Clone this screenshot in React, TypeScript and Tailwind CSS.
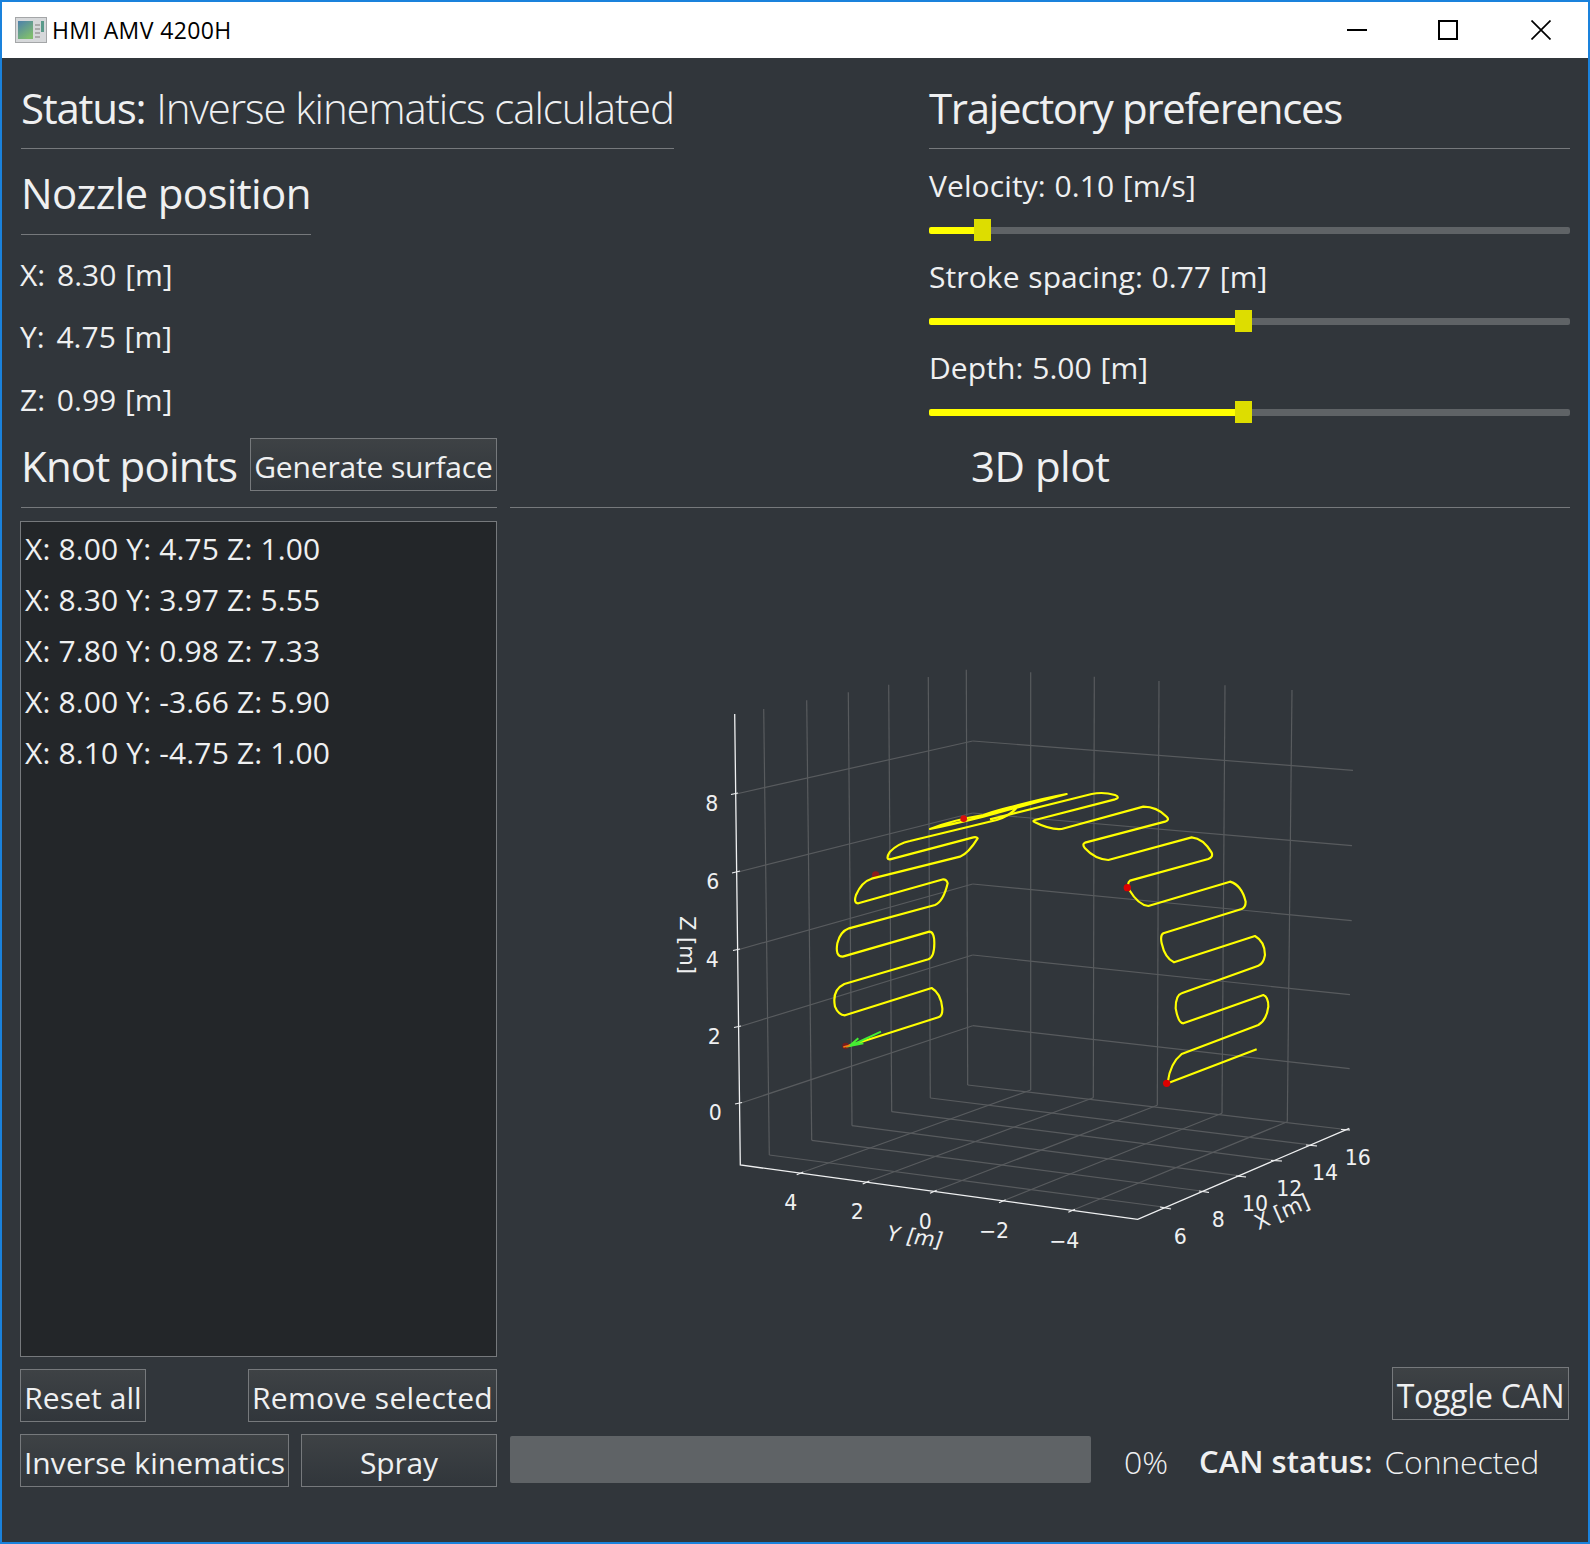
import React from "react";

const grid: [number, number, number, number][] = [
  // verticals on the left wall
  [763.7, 709, 769.3, 1155], [806.7, 700.3, 811.7, 1140.3], [848.3, 692.3, 852, 1125.7],
  [888.7, 684.7, 891.7, 1111.7], [928.3, 677, 930.3, 1098], [966.3, 669.7, 967.7, 1085],
  // verticals on the back wall
  [1030.7, 672.3, 1030.7, 1090], [1094.3, 676.7, 1093.3, 1097.7], [1159, 681, 1157.3, 1105.3],
  [1225, 685.3, 1222, 1113.3], [1292, 690, 1287.3, 1121.7],
  // Z lines, left wall
  [736, 794, 972.7, 741], [738, 872, 972.7, 813], [739, 949.5, 972.7, 884], [740, 1026.5, 972.7, 955], [741, 1103, 972.7, 1025.7],
  // Z lines, back wall
  [972.7, 741, 1353, 770.3], [972.7, 813, 1352, 845.7], [972.7, 884, 1351.7, 920.7], [972.7, 955, 1350, 994.7], [972.7, 1025.7, 1349.7, 1068.7],
  // floor, X const
  [769.3, 1155, 1170.7, 1208], [811.7, 1140.3, 1209, 1192], [852, 1125.7, 1246, 1176.7],
  [891.7, 1111.7, 1281.7, 1161], [930.3, 1098, 1316.7, 1145.7], [967.7, 1085, 1350, 1130],
  // floor, Y const
  [803.3, 1172, 1030.7, 1090], [869.3, 1181, 1093.3, 1097.7], [936.7, 1190.3, 1157.3, 1105.3],
  [1005.7, 1199.7, 1222, 1113.3], [1075, 1209.3, 1287.3, 1121.7],
];

const ticks: [number, number, number, number][] = [
  [731, 794.5, 738, 793], [732, 873, 740, 871], [733, 950.5, 740, 949], [734, 1027.5, 741, 1026], [735, 1104, 742, 1102.5],
  [796.7, 1174.7, 803.3, 1172], [862.7, 1184, 869.3, 1181], [930, 1193.3, 936.7, 1190.3], [999, 1202.7, 1005.7, 1199.7], [1068.3, 1212.3, 1075, 1209.3],
  [1160, 1207, 1171, 1209], [1199, 1191, 1209, 1192.5], [1236, 1176, 1246, 1177], [1271, 1160.5, 1282, 1161], [1306, 1145, 1317, 1146], [1341, 1129.5, 1350, 1130],
];

const labels: [string, number, number][] = [
  ["8", 711.7, 804.3], ["6", 712.7, 881.7], ["4", 712.3, 960], ["2", 714.3, 1037], ["0", 715.3, 1113],
  ["4", 790.7, 1203.3], ["2", 857.3, 1212.2], ["0", 925.3, 1222.2], ["\u22122", 994, 1231.2], ["\u22124", 1064.3, 1241],
  ["6", 1180.3, 1237.2], ["8", 1218.3, 1220.3], ["10", 1255, 1204], ["12", 1289.3, 1188.5], ["14", 1325, 1173], ["16", 1357.7, 1158.3],
];

const leftPath =
  "M595 1158 L865 1072 Q878 1068 877 1045 Q873 1000 845 984 L585 1066 Q565 1065 555 1040 Q545 990 583 972 L835 898 Q853 892 853 850 Q853 815 838 815 L578 890 Q555 890 562 850 Q570 815 597 805 L855 735 Q880 725 893 670 Q890 658 880 658 L625 730 Q610 730 618 705 Q635 665 665 656 L930 590 Q955 580 983 535 Q980 530 970 532 L720 598 Q705 598 720 575 Q745 550 780 543 L1040 480 Q1085 465 1105 437 Q1060 445 1000 465 Q900 482 840 507 Q900 495 1000 470 L1250 402 Q1150 420 1000 465";
const rightPath =
  "M-30 478 L275 402 Q310 395 345 405 Q362 412 345 418 L105 480 Q95 483 105 487 Q150 510 185 507 L430 440 Q470 440 500 470 Q510 480 495 485 L255 548 Q245 552 255 565 Q285 598 325 600 L575 532 Q610 535 635 578 Q640 592 625 597 L390 662 Q380 668 388 690 Q415 735 445 738 L690 665 Q725 675 737 725 Q737 742 725 747 L490 820 Q480 825 485 850 Q495 895 522 907 L765 828 Q795 845 795 885 Q790 912 775 917 L545 1000 Q527 1005 527 1045 Q535 1090 550 1090 L790 1005 Q805 1010 805 1040 Q800 1080 775 1095 L545 1182 Q510 1210 503 1268 M503 1270 L770 1168";

function Plot() {
  return (
    <svg viewBox="510 508 1060 859" className="block w-[1060px] h-[859px]" fontFamily="'DejaVu Sans', sans-serif" fill="#eff0f1">
      {grid.map(([a, b, c, d], i) => (
        <line key={i} x1={a} y1={b} x2={c} y2={d} stroke="#585b5e" strokeWidth="1.2" />
      ))}
      <polyline points="734.7,714 740.3,1165 1137.7,1219.3 1349.3,1128.3" fill="none" stroke="#eff0f1" strokeWidth="1.3" />
      {ticks.map(([a, b, c, d], i) => (
        <line key={i} x1={a} y1={b} x2={c} y2={d} stroke="#eff0f1" strokeWidth="1.2" />
      ))}
      {labels.map(([t, x, y], i) => (
        <text key={i} x={x} y={y} textAnchor="middle" dominantBaseline="central" fontSize="20.5">{t}</text>
      ))}
      <text transform="translate(915 1237) rotate(7.5)" textAnchor="middle" dominantBaseline="central" fontSize="21" fontStyle="oblique">Y [m]</text>
      <text transform="translate(1282 1212) rotate(-24)" textAnchor="middle" dominantBaseline="central" fontSize="21">X [m]</text>
      <text transform="translate(686.5 945) rotate(90)" textAnchor="middle" dominantBaseline="central" fontSize="21">Z [m]</text>
      <g transform="translate(650 660) scale(0.33333)">
        <circle cx="677" cy="645" r="11" fill="#8a1a1c" />
        <circle cx="587" cy="1158" r="10" fill="#761c1d" />
        <path d={leftPath} fill="none" stroke="#ffff00" strokeWidth="6.5" strokeLinejoin="round" />
        <circle cx="941" cy="476" r="10" fill="#d80f0c" />
        <path d="M693 1115 L600 1158 M625 1135 L598 1158 L640 1150" fill="none" stroke="#44ee33" strokeWidth="6" />
        <path d="M580 1161 L600 1156" stroke="#ff7a10" strokeWidth="5" />
      </g>
      <g transform="translate(1000 660) scale(0.33333)">
        <path d={rightPath} fill="none" stroke="#ffff00" strokeWidth="6.5" strokeLinejoin="round" />
        <circle cx="382" cy="683" r="11" fill="#dd0000" />
        <circle cx="500" cy="1270" r="11" fill="#dd0000" />
      </g>
    </svg>
  );
}

function Slider({ label, fill }: { label: string; fill: string }) {
  return (
    <div className="h-[91px] pt-[17px]">
      <div className="h-[38px] flex items-center text-[30px] tracking-[0.1px] [word-spacing:0.7px]">{label}</div>
      <div className="mt-[15px] h-[22px] flex items-center">
        <div className={`h-[7px] bg-[#ffff00] rounded-l-[2px] ${fill}`} />
        <div className="w-[17px] h-[22px] bg-[#dddd00]" />
        <div className="h-[7px] flex-1 bg-[#5f6366] rounded-r-[2px]" />
      </div>
    </div>
  );
}

function Btn({ children, className }: { children: React.ReactNode; className: string }) {
  return (
    <div className={`flex items-center justify-center pt-[4px] border border-[#76797c] bg-linear-to-b from-[#3e4245] to-[#31363b] whitespace-nowrap ${className}`}>
      {children}
    </div>
  );
}

export default function App() {
  return (
    <div className="w-[1590px] h-[1544px] border-2 border-[#1a82dc] flex flex-col text-[#eff0f1] font-['Open_Sans','Noto_Sans',sans-serif]">
      <div className="h-[56px] bg-white flex items-center text-black shrink-0">
        <svg width="32" height="26" viewBox="0 0 32 26" className="ml-[13px]">
          <rect x="0.5" y="0.5" width="31" height="25" fill="#d6d8da" stroke="#a4a6a8" />
          <defs>
            <linearGradient id="ic" x1="0" y1="0" x2="0.6" y2="1">
              <stop offset="0" stopColor="#4c80ac" />
              <stop offset="1" stopColor="#7fbd6e" />
            </linearGradient>
          </defs>
          <rect x="3" y="4" width="15" height="18" fill="url(#ic)" />
          <rect x="20" y="7" width="5" height="2" fill="#aaa" />
          <rect x="20" y="11" width="5" height="2" fill="#aaa" />
          <rect x="20" y="15" width="5" height="2" fill="#aaa" />
          <rect x="20" y="19" width="5" height="2" fill="#aaa" />
          <rect x="26" y="4" width="3" height="11" fill="#5a9a8a" />
        </svg>
        <span className="ml-[5px] text-[23px] tracking-[0.4px]">HMI AMV 4200H</span>
        <div className="ml-auto mr-[37px] flex items-center">
          <div className="w-[20px] h-[2px] bg-black" />
          <div className="ml-[71px] w-[20px] h-[20px] border-2 border-black" />
          <svg width="20" height="20" viewBox="0 0 20 20" className="ml-[73px]">
            <path d="M0.5 0.5 L19.5 19.5 M19.5 0.5 L0.5 19.5" stroke="#000" strokeWidth="1.7" fill="none" />
          </svg>
        </div>
      </div>

      <div className="flex-1 bg-[#31363b] pl-[19px] pr-[18px] flex flex-col">
        <div className="h-[380px] flex shrink-0">
          <div className="flex-1">
            <div className="w-fit h-[91px] border-b border-[#76797c] flex items-center pt-[8px] text-[42px]">
              <span className="tracking-[-1.27px]">Status:</span>
              <span className="ml-[11px] font-light tracking-[-1.08px]">Inverse kinematics calculated</span>
            </div>
            <div className="w-fit h-[86px] border-b border-[#76797c] flex items-center pt-[2px] text-[42px] tracking-[-0.65px]">Nozzle position</div>
            <div className="mt-[8px] -ml-[1px] flex flex-col text-[30px] [word-spacing:1px]">
              <div className="h-[62px] flex items-center"><span className="mr-[3px]">X:</span>&nbsp;8.30 [m]</div>
              <div className="h-[62px] flex items-center"><span className="mr-[3px]">Y:</span>&nbsp;4.75 [m]</div>
              <div className="h-[65px] flex items-center"><span className="mr-[3px]">Z:</span>&nbsp;0.99 [m]</div>
            </div>
          </div>
          <div className="w-[641px]">
            <div className="h-[91px] border-b border-[#76797c] flex items-center pt-[8px] text-[42px] tracking-[-1.3px]">Trajectory preferences</div>
            <Slider label="Velocity: 0.10 [m/s]" fill="w-[45px]" />
            <Slider label="Stroke spacing: 0.77 [m]" fill="w-[306px]" />
            <Slider label="Depth: 5.00 [m]" fill="w-[306px]" />
          </div>
        </div>

        <div className="flex-1 flex gap-[13px]">
          <div className="w-[476px] flex flex-col">
            <div className="h-[70px] border-b border-[#76797c] flex items-start justify-between">
              <div className="h-[54px] flex items-center text-[42px] tracking-[-0.8px]">Knot points</div>
              <Btn className="w-[247px] h-[53px] text-[30px] tracking-[-0.16px]">Generate surface</Btn>
            </div>
            <div className="mt-[13px] -ml-[1px] h-[836px] bg-[#232629] border border-[#76797c] pt-[1px] pl-[4px] text-[30px] tracking-[0.15px]">
              <div className="h-[51px] flex items-center">X: 8.00 Y: 4.75 Z: 1.00</div>
              <div className="h-[51px] flex items-center">X: 8.30 Y: 3.97 Z: 5.55</div>
              <div className="h-[51px] flex items-center">X: 7.80 Y: 0.98 Z: 7.33</div>
              <div className="h-[51px] flex items-center">X: 8.00 Y: -3.66 Z: 5.90</div>
              <div className="h-[51px] flex items-center">X: 8.10 Y: -4.75 Z: 1.00</div>
            </div>
            <div className="mt-[12px] -ml-[1px] flex justify-between">
              <Btn className="w-[126px] h-[53px] text-[30px] tracking-[0.08px]">Reset all</Btn>
              <Btn className="w-[249px] h-[53px] text-[30px] tracking-[0.28px]">Remove selected</Btn>
            </div>
            <div className="mt-[12px] -ml-[1px] flex justify-between">
              <Btn className="w-[269px] h-[53px] text-[30px] tracking-[0.08px]">Inverse kinematics</Btn>
              <Btn className="w-[196px] h-[53px] text-[30px] tracking-[-0.2px]">Spray</Btn>
            </div>
          </div>
          <div className="flex-1 flex flex-col">
            <div className="h-[70px] border-b border-[#76797c] pl-[461px]">
              <div className="h-[54px] flex items-center text-[42px] tracking-[-0.5px]">3D plot</div>
            </div>
            <Plot />
            <div className="flex justify-end pr-[1px]">
              <Btn className="w-[177px] h-[53px] text-[32px] tracking-[-0.3px]">Toggle CAN</Btn>
            </div>
            <div className="mt-[16px] h-[47px] flex items-center">
              <div className="w-[581px] h-[47px] bg-[#5f6366] rounded-[2px]" />
              <span className="ml-[33px] pt-[4px] font-light text-[32px]">0%</span>
              <span className="ml-[31px] pt-[4px] font-semibold text-[31px]">CAN status:</span>
              <span className="ml-[12px] pt-[4px] font-light text-[32px] tracking-[-0.2px]">Connected</span>
            </div>
          </div>
        </div>
      </div>
    </div>
  );
}
